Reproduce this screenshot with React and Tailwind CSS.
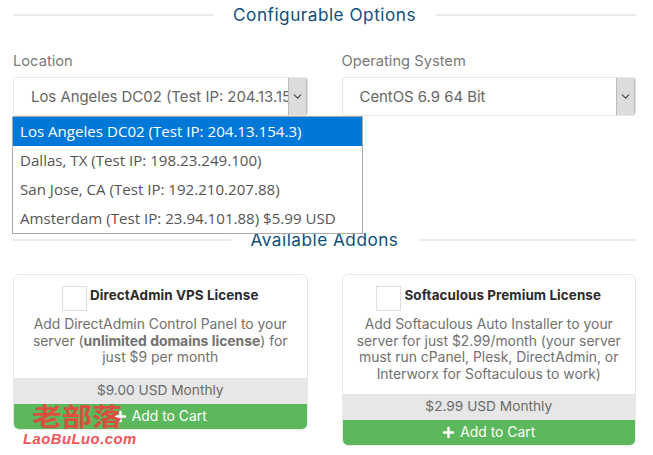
import React from 'react';
import { FaPlus } from 'react-icons/fa';
import { ChevronDown } from 'lucide-react';

const options = [
  'Dallas, TX (Test IP: 198.23.249.100)',
  'San Jose, CA (Test IP: 192.210.207.88)',
  'Amsterdam (Test IP: 23.94.101.88) $5.99 USD',
];

const Heading = ({ children }) => (
  <div className="flex items-center h-[30px]">
    <div className="flex-1 h-[2px] bg-[#ececec]"></div>
    <h2 className="px-5 text-[17.2px] tracking-[0.5px] text-[#0e4f7c] leading-none">{children}</h2>
    <div className="flex-1 h-[2px] bg-[#ececec]"></div>
  </div>
);

const SelectBox = ({ label, value }) => (
  <div>
    <div className="h-[24px] text-[14.7px] leading-[24px] text-[#7a7a7a]">{label}</div>
    <div className="mt-[4px] flex h-[39px] rounded-[3px] border border-[#e6e6e6] bg-white overflow-hidden">
      <div className="flex-1 pl-[17px] text-[14.9px] leading-[38px] text-[#666] whitespace-nowrap overflow-hidden">{value}</div>
      <div className="w-[19px] shrink-0 flex items-center justify-center bg-[#dcdcdc] border-x border-[#bbb]">
        <ChevronDown size={13} strokeWidth={2} color="#444" />
      </div>
    </div>
  </div>
);

const AddonCard = ({ title, price, children }) => (
  <div className="rounded-[6px] border border-[#e8e8e8] bg-white overflow-hidden">
    <div className="flex justify-center items-start pt-[11px] h-[36px]">
      <div className="w-[25px] h-[25px] border border-[#dedede] mr-[3px] shrink-0"></div>
      <div className="text-[13.4px] font-bold text-[#2b2b2b] leading-[18px] tracking-[0.1px]">{title}</div>
    </div>
    <div className="px-[10px] pt-[5px] pb-[12px] text-center text-[13.9px] leading-[16.5px] text-[#717171]">{children}</div>
    <div className="h-[26px] bg-[#e7e7e7] text-center text-[13.7px] leading-[25px] text-[#6a6a6a]">{price}</div>
    <div className="h-[25px] bg-[#5cb85c] flex items-center justify-center gap-[5px] text-[13.9px] text-white">
      <FaPlus size={13} />
      <span>Add to Cart</span>
    </div>
  </div>
);

export default function App() {
  return (
    <div className="relative w-[653px] h-[455px] overflow-hidden bg-white pl-[13px] pr-[17px] font-['Inter',sans-serif]">
      <Heading>Configurable Options</Heading>

      <div className="grid grid-cols-2 gap-[34px] mt-[19px]">
        <SelectBox label="Location" value="Los Angeles DC02 (Test IP: 204.13.154.3)" />
        <SelectBox label="Operating System" value="CentOS 6.9 64 Bit" />
      </div>

      {/* open dropdown list */}
      <div className="absolute left-[12px] top-[116px] w-[351px] h-[118px] z-10 border border-[#aaa] bg-white font-['Open_Sans',sans-serif] text-[15.1px] text-[#555]">
        <div className="h-[29px] leading-[29px] px-[7px] bg-[#0078d7] text-white">Los Angeles DC02 (Test IP: 204.13.154.3)</div>
        {options.map((opt, i) => (
          <div key={i} className="h-[29px] leading-[29px] px-[7px]">{opt}</div>
        ))}
      </div>

      <div className="mt-[109px]">
        <Heading>Available Addons</Heading>
      </div>

      <div className="grid grid-cols-2 gap-[34px] mt-[19px] items-start">
        <AddonCard title="DirectAdmin VPS License" price="$9.00 USD Monthly">
          Add DirectAdmin Control Panel to your server (<b>unlimited domains license</b>) for just $9 per month
        </AddonCard>
        <AddonCard title="Softaculous Premium License" price="$2.99 USD Monthly">
          Add Softaculous Auto Installer to your server for just $2.99/month (your server must run cPanel, Plesk, DirectAdmin, or Interworx for Softaculous to work)
        </AddonCard>
      </div>

      {/* watermark */}
      <div className="absolute left-[23px] top-[403px] z-20 leading-none">
        <div className="ml-[9px] text-[30px] font-bold text-[#d9503f] font-['Noto_Sans_CJK_SC',sans-serif] leading-[28px] scale-y-[0.85] origin-top">老部落</div>
        <div className="text-[14.8px] font-bold italic tracking-[0.5px] text-[#f0555a] font-['Liberation_Sans',sans-serif] leading-[16px]">LaoBuLuo.com</div>
      </div>
    </div>
  );
}
